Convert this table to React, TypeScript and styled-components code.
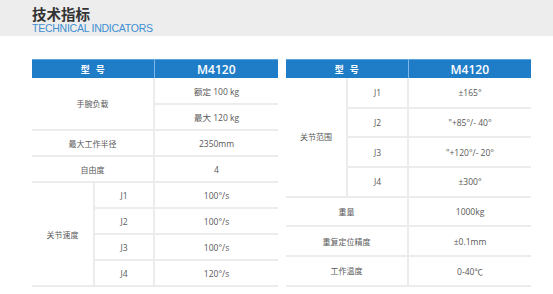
import React from "react";
import styled, { createGlobalStyle } from "styled-components";

const GlobalStyle = createGlobalStyle`
  html, body {
    margin: 0;
    padding: 0;
    background: #ffffff;
  }
  body {
    font-family: "Liberation Sans", "Noto Sans CJK SC", sans-serif;
  }
`;

type Row = {
  label?: string;
  span?: number;
  sub?: string;
  value: string;
  full?: boolean;
};

const leftRows: Row[] = [
  { label: "手腕负载", span: 2, value: "额定 100 kg", full: true },
  { value: "最大 120 kg" },
  { label: "最大工作半径", value: "2350mm", full: true },
  { label: "自由度", value: "4", full: true },
  { label: "关节速度", span: 4, sub: "J1", value: "100°/s" },
  { sub: "J2", value: "100°/s" },
  { sub: "J3", value: "100°/s" },
  { sub: "J4", value: "120°/s" },
];

const rightRows: Row[] = [
  { label: "关节范围", span: 4, sub: "J1", value: "±165°" },
  { sub: "J2", value: "\"+85°/- 40°" },
  { sub: "J3", value: "\"+120°/- 20°" },
  { sub: "J4", value: "±300°" },
  { label: "重量", value: "1000kg", full: true },
  { label: "重复定位精度", value: "±0.1mm", full: true },
  { label: "工作温度", value: "0-40℃", full: true },
];

const SpecTable: React.FC<{ rows: Row[]; rowHeight: number; width: number; cols: number[] }> = ({
  rows,
  rowHeight,
  width,
  cols,
}) => (
  <Table style={{ width }}>
    <colgroup>
      {cols.map((c, i) => (
        <col key={i} style={{ width: c }} />
      ))}
    </colgroup>
    <thead>
      <tr>
        <HeadCell colSpan={2}>型&nbsp;&nbsp;&nbsp;号</HeadCell>
        <ModelCell>M4120</ModelCell>
      </tr>
    </thead>
    <tbody>
      {rows.map((r, i) => (
        <tr key={i} style={{ height: rowHeight }}>
          {r.label && (
            <LabelCell rowSpan={r.span || 1} colSpan={r.full ? 2 : 1}>
              {r.label}
            </LabelCell>
          )}
          {r.sub && <SubCell>{r.sub}</SubCell>}
          <ValueCell>{r.value}</ValueCell>
        </tr>
      ))}
    </tbody>
  </Table>
);

const App: React.FC = () => (
  <>
    <GlobalStyle />
    <Banner>
      <Title>技术指标</Title>
      <Subtitle>TECHNICAL INDICATORS</Subtitle>
    </Banner>
    <Tables>
      <SpecTable rows={leftRows} rowHeight={26} width={246} cols={[62, 60, 124]} />
      <SpecTable rows={rightRows} rowHeight={29.7} width={245} cols={[61, 61, 123]} />
    </Tables>
  </>
);

const Banner = styled.header`
  height: 36px;
  background: #ededed;
  padding: 6px 0 0 32px;
  box-sizing: border-box;
`;

const Title = styled.h1`
  margin: 0;
  font-family: "Noto Sans CJK SC", sans-serif;
  font-size: 14.5px;
  line-height: 15px;
  height: 15px;
  font-weight: 700;
  color: #333333;
`;

const Subtitle = styled.div`
  font-family: "Liberation Sans", sans-serif;
  font-size: 10.5px;
  line-height: 11px;
  letter-spacing: -0.25px;
  color: #3d8fd3;
  margin-top: 2px;
`;

const Tables = styled.main`
  display: flex;
  gap: 8px;
  padding: 23px 0 0 32px;
  align-items: flex-start;
`;

const Table = styled.table`
  border-collapse: collapse;
  table-layout: fixed;
`;

const HeadCell = styled.th`
  height: 18px;
  padding: 0;
  background: #1f7dc8;
  color: #ffffff;
  font-family: "Noto Sans CJK SC", sans-serif;
  font-size: 9px;
  font-weight: 700;
  border-top: 1px solid #5aa3dc;
  border-right: 1px solid #7fb8e6;
`;

const ModelCell = styled(HeadCell)`
  font-family: "Open Sans", sans-serif;
  font-size: 12px;
  font-weight: 600;
  border-right: none;
`;

const Cell = styled.td`
  padding: 0;
  text-align: center;
  vertical-align: middle;
  color: #585858;
  font-size: 8px;
  font-family: "Noto Sans CJK SC", sans-serif;
  border-bottom: 2px solid #ececec;
`;

const LabelCell = styled(Cell)`
  border-right: 2px solid #ececec;
`;

const SubCell = styled(Cell)`
  font-family: "Open Sans", sans-serif;
  font-size: 8.5px;
  border-right: 2px solid #ececec;
`;

const ValueCell = styled(Cell)`
  font-family: "Open Sans", "Noto Sans CJK SC", sans-serif;
  font-size: 8.5px;
`;

export default App;
